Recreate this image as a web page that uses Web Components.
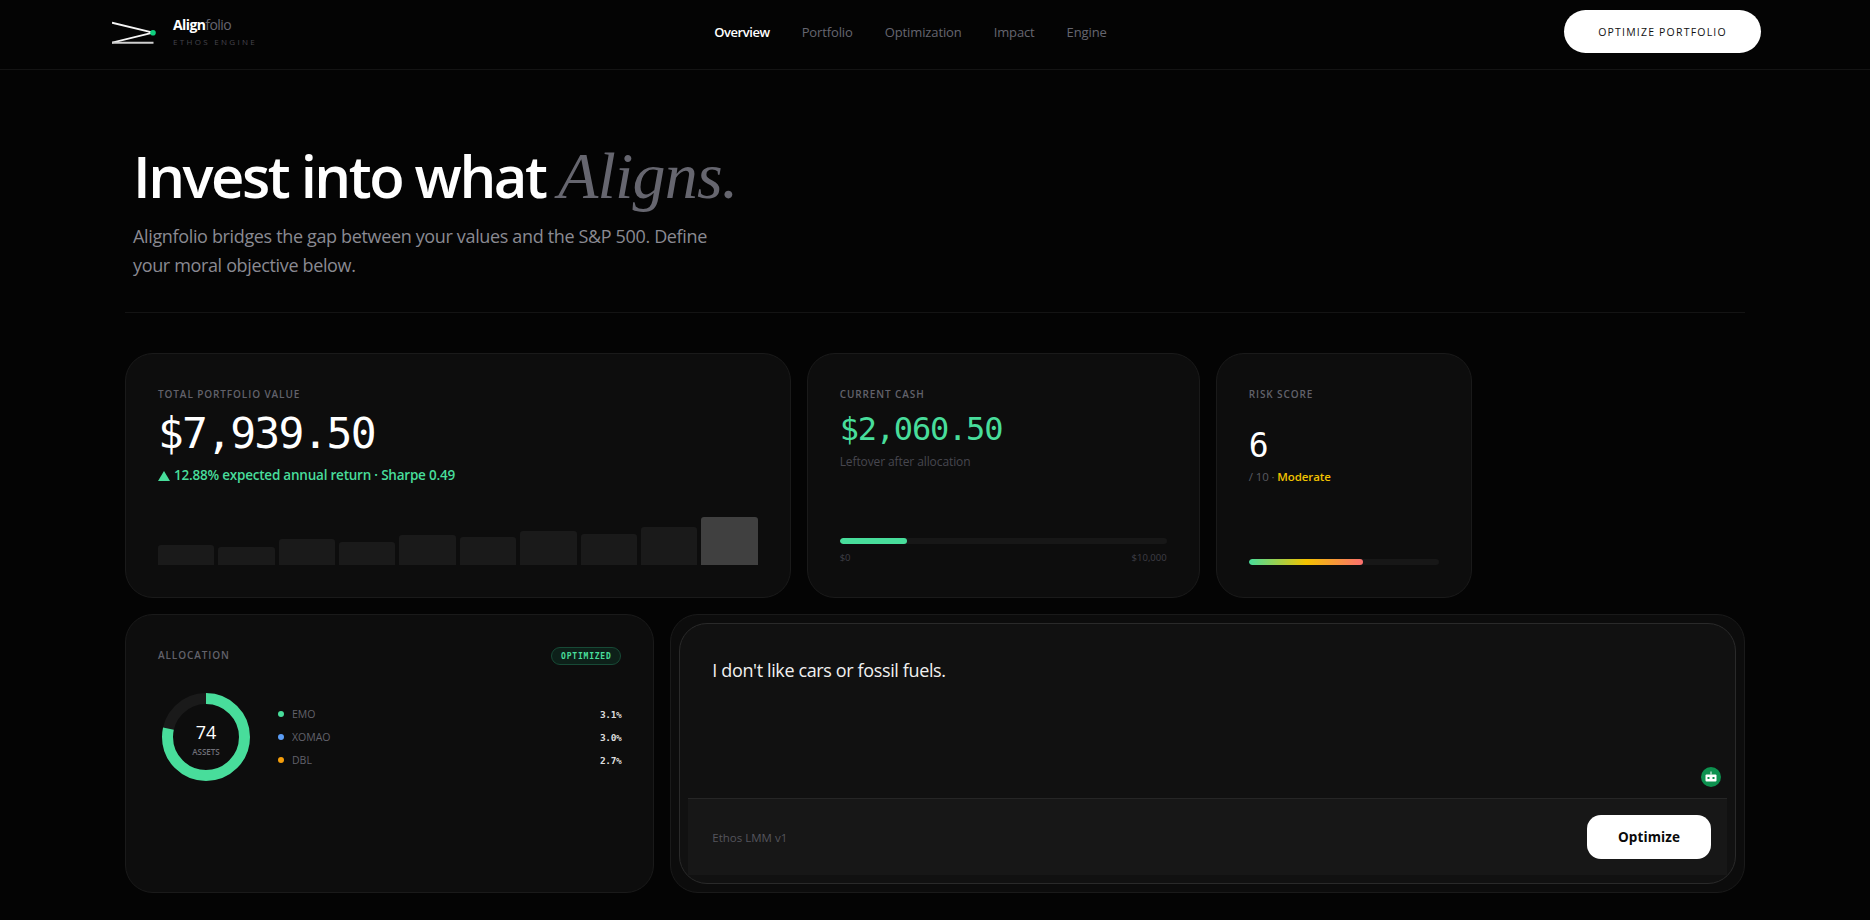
<!DOCTYPE html>
<html>
<head>
<meta charset="utf-8">
<title>Alignfolio</title>
<style>
html,body{margin:0;background:#040404;color:#fff;font-family:"Open Sans","Noto Sans",sans-serif;}
</style>
</head>
<body>
<af-nav></af-nav>
<af-main>
  <af-hero></af-hero>
  <af-grid>
    <af-total-card></af-total-card>
    <af-cash-card></af-cash-card>
    <af-risk-card></af-risk-card>
    <af-allocation-card></af-allocation-card>
    <af-prompt-card></af-prompt-card>
  </af-grid>
</af-main>

<script>
const SANS = `"Open Sans","Noto Sans",sans-serif`;
const MONO = `"DejaVu Sans Mono","Liberation Mono",monospace`;
const SERIF = `"Liberation Serif",serif`;

class ShadowEl extends HTMLElement{
    constructor(html){
        super();
        this.attachShadow({mode:"open"});
        this.shadowRoot.innerHTML = html;
    }
}

class AfNav extends ShadowEl{
    constructor(){ super(`
<style>
:host{display:flex;align-items:center;justify-content:space-between;height:63px;padding:0 109px 6px 112px;border-bottom:1px solid #141414;font-family:${SANS};}
.brand{display:flex;align-items:center;gap:17px;width:378px;}
.logo{display:block;}
.words{display:flex;flex-direction:column;}
.name{font-size:14px;line-height:17px;color:#666670;letter-spacing:-.6px;}
.name b{color:#fff;font-weight:700;}
.tag{font-size:8px;line-height:12px;letter-spacing:2.3px;color:#45454d;margin-top:3px;}
nav{display:flex;gap:32px;font-size:13px;color:#666670;font-weight:500;letter-spacing:-.12px;}
nav .on{color:#fff;font-weight:600;letter-spacing:-.45px;}
button{width:197px;height:43px;border:0;border-radius:22px;background:#fff;color:#111;font:500 10.5px ${SANS};letter-spacing:1.2px;}
</style>
<div class="brand">
  <svg class="logo" width="44" height="30" viewBox="0 0 44 30">
    <path d="M0 5.7 41 15.7 0 25.7" fill="none" stroke="#f6f6f6" stroke-width="1.8"/>
    <path d="M0 25.7H41.5" fill="none" stroke="#cfcfcf" stroke-width="2"/>
    <circle cx="41" cy="15.7" r="2.8" fill="#0fd07f"/>
  </svg>
  <div class="words">
    <div class="name"><b>Align</b>folio</div>
    <div class="tag">ETHOS ENGINE</div>
  </div>
</div>
<nav><span class="on">Overview</span><span>Portfolio</span><span>Optimization</span><span>Impact</span><span>Engine</span></nav>
<div style="width:430px;display:flex;justify-content:flex-end"><button>OPTIMIZE PORTFOLIO</button></div>
`); }
}

class AfMain extends ShadowEl{
    constructor(){ super(`
<style>:host{display:block;padding:0 125px 27px 125px;}</style>
<slot></slot>`); }
}

class AfHero extends ShadowEl{
    constructor(){ super(`
<style>
:host{display:block;padding:73px 8px 32px;border-bottom:1px solid #141414;margin-bottom:40px;font-family:${SANS};}
h1{margin:0;font-size:58px;line-height:66px;font-weight:600;letter-spacing:-2.5px;color:#fff;}
em{font-family:${SERIF};font-weight:400;color:#66666f;letter-spacing:-.8px;font-size:66px;}
p{margin:13px 0 0;width:600px;font-size:18px;line-height:29px;color:#8a8a92;letter-spacing:-.35px;}
</style>
<h1>Invest into what <em>Aligns.</em></h1>
<p>Alignfolio bridges the gap between your values and the S&amp;P 500. Define your moral objective below.</p>
`); }
}

class AfGrid extends ShadowEl{
    constructor(){ super(`
<style>:host{display:grid;grid-template-columns:repeat(12,1fr);grid-template-rows:245px 279px;gap:16px;}</style>
<slot></slot>`); }
}

class AfCard extends ShadowEl{
    constructor(){ super(`
<style>
:host{display:flex;flex-direction:column;box-sizing:border-box;height:100%;padding:32px;background:#0d0d0d;border:1px solid #1a1a1a;border-radius:28px;font-family:${SANS};}
</style>
<slot></slot>`); }
}

class AfLabel extends ShadowEl{
    constructor(){ super(`
<style>
:host{display:block;font-size:10px;line-height:16px;font-weight:600;letter-spacing:.9px;color:#62626b;font-family:${SANS};}
</style>
<slot></slot>`); }
}

class AfBars extends ShadowEl{
    constructor(){
        const heights = [20,18,26,23,30,28,34,31,38,48];
        super(`
<style>
:host{display:flex;align-items:flex-end;gap:4px;height:48px;}
i{display:block;flex:1;background:#1a1a1a;border-radius:3px 3px 0 0;}
i:last-child{background:#404040;}
</style>
${heights.map(h=>`<i style="height:${h}px"></i>`).join('')}`);
    }
}

class AfMeter extends ShadowEl{
    constructor(){ super(`
<style>
:host{display:block;height:6px;background:#171717;border-radius:3px;overflow:hidden;}
div{height:100%;border-radius:3px;}
</style>
<div></div>`); }
    connectedCallback(){
        const bar = this.shadowRoot.querySelector('div');
        bar.style.width = this.getAttribute('value')+'%';
        bar.style.background = this.getAttribute('fill');
    }
}

class AfTotalCard extends ShadowEl{
    constructor(){ super(`
<style>
:host{display:block;grid-column:span 5;}
.value{font:400 43px/50px ${MONO};letter-spacing:-1.8px;color:#fff;margin-top:6px;}
.delta{font-size:13.5px;line-height:20px;font-weight:600;letter-spacing:-.22px;color:#48dd9b;margin-top:7px;}
.delta svg{margin-right:4px;vertical-align:-1px;}
af-bars{margin-top:auto;}
</style>
<af-card>
  <af-label>TOTAL PORTFOLIO VALUE</af-label>
  <div class="value">$7,939.50</div>
  <div class="delta"><svg width="12" height="10" viewBox="0 0 12 10"><path d="M6 0 12 10H0Z" fill="#48dd9b"/></svg>12.88% expected annual return · Sharpe 0.49</div>
  <af-bars></af-bars>
</af-card>`); }
}

class AfCashCard extends ShadowEl{
    constructor(){ super(`
<style>
:host{display:block;grid-column:span 3;}
.value{font:400 32px/40px ${MONO};letter-spacing:-1.2px;color:#48dd9b;margin-top:7px;}
.note{font-size:12px;line-height:16px;color:#47474f;margin-top:5px;letter-spacing:-.1px;}
af-meter{margin-top:auto;}
.ends{display:flex;justify-content:space-between;font-size:9.5px;line-height:14px;color:#3f3f47;margin-top:7px;margin-bottom:0;}
</style>
<af-card>
  <af-label>CURRENT CASH</af-label>
  <div class="value">$2,060.50</div>
  <div class="note">Leftover after allocation</div>
  <af-meter value="20.6" fill="#48dd9b"></af-meter>
  <div class="ends"><span>$0</span><span>$10,000</span></div>
</af-card>`); }
}

class AfRiskCard extends ShadowEl{
    constructor(){ super(`
<style>
:host{display:block;grid-column:span 2;}
.value{font:400 33px/40px ${MONO};color:#fff;margin-top:24px;}
.note{font-size:11.5px;line-height:16px;color:#5a5a62;margin-top:3px;letter-spacing:-.1px;}
.note b{color:#f2c200;font-weight:600;}
af-meter{margin-top:auto;}
</style>
<af-card>
  <af-label>RISK SCORE</af-label>
  <div class="value">6</div>
  <div class="note">/ 10 · <b>Moderate</b></div>
  <af-meter value="60" fill="linear-gradient(90deg,#48dd9b,#f2c200 50%,#fb6f6f)"></af-meter>
</af-card>`); }
}

class AfDonut extends ShadowEl{
    constructor(){ super(`
<style>
:host{display:grid;place-items:center;position:relative;width:88px;height:88px;flex:none;}
svg{position:absolute;inset:0;}
.center{padding-top:4px;}
.n{font-size:18px;line-height:22px;color:#fff;text-align:center;font-weight:400;}
.t{font-size:8px;line-height:10px;color:#6f6f78;text-align:center;font-weight:600;margin-top:4px;}
</style>
<svg width="88" height="88" viewBox="0 0 88 88">
  <circle cx="44" cy="44" r="38.5" fill="none" stroke="#1a1a1a" stroke-width="11"/>
  <circle cx="44" cy="44" r="38.5" fill="none" stroke="#48dd9b" stroke-width="11" stroke-dasharray="189.6 242" transform="rotate(-90 44 44)"/>
</svg>
<div class="center"><div class="n">74</div><div class="t">ASSETS</div></div>`); }
}

class AfLegendRow extends ShadowEl{
    constructor(){ super(`
<style>
:host{display:flex;align-items:center;height:23px;font-family:${SANS};}
i{width:6px;height:6px;border-radius:50%;margin-right:8px;}
.name{flex:1;font-size:10.5px;color:#62626b;}
.pct{font:700 9.5px ${MONO};color:#dcdcdc;letter-spacing:-.4px;}
</style>
<i></i><span class="name"></span><span class="pct"></span>`); }
    connectedCallback(){
        this.shadowRoot.querySelector('i').style.background = this.getAttribute('color');
        this.shadowRoot.querySelector('.name').textContent = this.getAttribute('name');
        this.shadowRoot.querySelector('.pct').textContent = this.getAttribute('pct');
    }
}

class AfAllocationCard extends ShadowEl{
    constructor(){ super(`
<style>
:host{display:block;grid-column:span 4;}
.head{display:flex;justify-content:space-between;align-items:flex-start;}
.pill{box-sizing:border-box;height:18px;width:70px;display:flex;align-items:center;justify-content:center;border:1px solid #174a36;background:#0d2019;border-radius:9px;font:700 8px ${MONO};letter-spacing:.8px;color:#48dd9b;}
.body{display:flex;align-items:center;gap:28px;margin-top:28px;margin-left:4px;}
.legend{flex:1;}
</style>
<af-card>
  <div class="head"><af-label>ALLOCATION</af-label><span class="pill">OPTIMIZED</span></div>
  <div class="body">
    <af-donut></af-donut>
    <div class="legend">
      <af-legend-row color="#48dd9b" name="EMO" pct="3.1%"></af-legend-row>
      <af-legend-row color="#5b9df5" name="XOMAO" pct="3.0%"></af-legend-row>
      <af-legend-row color="#f59e0b" name="DBL" pct="2.7%"></af-legend-row>
    </div>
  </div>
</af-card>`); }
}

class AfPromptCard extends ShadowEl{
    constructor(){ super(`
<style>
:host{display:flex;box-sizing:border-box;grid-column:span 8;height:100%;padding:8px;background:#0c0c0c;border:1px solid #1a1a1a;border-radius:28px;font-family:${SANS};}
.inner{flex:1;display:flex;flex-direction:column;padding:8px;background:#111;border:1px solid #2a2a2a;border-radius:28px;}
.text{flex:1;position:relative;padding:25px 24px 0;font-size:18px;line-height:26px;color:#f0f0f0;letter-spacing:-.37px;}
.bot{position:absolute;right:6px;bottom:11px;display:block;}
.foot{display:flex;align-items:center;justify-content:space-between;height:76px;padding:0 16px 0 24px;background:#171717;border-top:1px solid #262626;}
.model{font-size:11.5px;color:#55555d;}
button{width:124px;height:44px;border:0;border-radius:14px;background:#fff;color:#0a0a0a;font:700 13.5px ${SANS};letter-spacing:.1px;}
</style>
<div class="inner">
  <div class="text">I don't like cars or fossil fuels.
    <svg class="bot" width="20" height="20" viewBox="0 0 20 20">
      <circle cx="10" cy="10" r="10" fill="#0d914f"/>
      <rect x="4.5" y="7.5" width="11" height="7" rx="1" fill="#fff"/>
      <rect x="9.5" y="4.5" width="1" height="3" fill="#fff"/>
      <rect x="6.5" y="10" width="2" height="2" fill="#0d914f"/>
      <rect x="11.5" y="10" width="2" height="2" fill="#0d914f"/>
    </svg>
  </div>
  <div class="foot"><span class="model">Ethos LMM v1</span><button>Optimize</button></div>
</div>`); }
}

customElements.define('af-nav',AfNav);
customElements.define('af-main',AfMain);
customElements.define('af-hero',AfHero);
customElements.define('af-grid',AfGrid);
customElements.define('af-card',AfCard);
customElements.define('af-label',AfLabel);
customElements.define('af-bars',AfBars);
customElements.define('af-meter',AfMeter);
customElements.define('af-donut',AfDonut);
customElements.define('af-legend-row',AfLegendRow);
customElements.define('af-total-card',AfTotalCard);
customElements.define('af-cash-card',AfCashCard);
customElements.define('af-risk-card',AfRiskCard);
customElements.define('af-allocation-card',AfAllocationCard);
customElements.define('af-prompt-card',AfPromptCard);
</script>
</body>
</html>
